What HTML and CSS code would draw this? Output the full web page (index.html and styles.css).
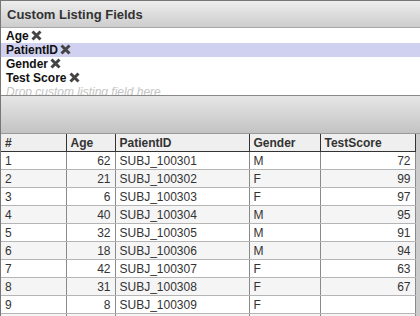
FILE: index.html
```html
<!DOCTYPE html>
<html lang="en">
<head>
  <meta charset="UTF-8" />
  <title>Custom Listing Fields</title>
  <link rel="stylesheet" href="styles.css">
</head>
<body>
  <div class="panel">
    <!-- Campos escolhidos -->
    <div class="panel-title">Custom Listing Fields</div>
    <ul class="field-list">
      <li>Age <svg class="remove" viewBox="0 0 11 11"><path d="M1.5 1.5L9.5 9.5M9.5 1.5L1.5 9.5"/></svg></li>
      <li class="selected">PatientID <svg class="remove" viewBox="0 0 11 11"><path d="M1.5 1.5L9.5 9.5M9.5 1.5L1.5 9.5"/></svg></li>
      <li>Gender <svg class="remove" viewBox="0 0 11 11"><path d="M1.5 1.5L9.5 9.5M9.5 1.5L1.5 9.5"/></svg></li>
      <li>Test Score <svg class="remove" viewBox="0 0 11 11"><path d="M1.5 1.5L9.5 9.5M9.5 1.5L1.5 9.5"/></svg></li>
      <li class="drop-hint">Drop custom listing field here</li>
    </ul>

    <div class="toolbar"></div>

    <!-- Grade de resultados -->
    <div class="grid-wrap">
      <table class="grid">
        <colgroup>
          <col class="c-num"><col class="c-age"><col class="c-id"><col class="c-gender"><col class="c-score">
        </colgroup>
        <thead>
          <tr><th>#</th><th>Age</th><th>PatientID</th><th>Gender</th><th>TestScore</th></tr>
        </thead>
        <tbody>
          <tr><td>1</td><td class="num">62</td><td>SUBJ_100301</td><td>M</td><td class="num">72</td></tr>
          <tr><td>2</td><td class="num">21</td><td>SUBJ_100302</td><td>F</td><td class="num">99</td></tr>
          <tr><td>3</td><td class="num">6</td><td>SUBJ_100303</td><td>F</td><td class="num">97</td></tr>
          <tr><td>4</td><td class="num">40</td><td>SUBJ_100304</td><td>M</td><td class="num">95</td></tr>
          <tr><td>5</td><td class="num">32</td><td>SUBJ_100305</td><td>M</td><td class="num">91</td></tr>
          <tr><td>6</td><td class="num">18</td><td>SUBJ_100306</td><td>M</td><td class="num">94</td></tr>
          <tr><td>7</td><td class="num">42</td><td>SUBJ_100307</td><td>F</td><td class="num">63</td></tr>
          <tr><td>8</td><td class="num">31</td><td>SUBJ_100308</td><td>F</td><td class="num">67</td></tr>
          <tr><td>9</td><td class="num">8</td><td>SUBJ_100309</td><td>F</td><td class="num"></td></tr>
          <tr class="empty"><td></td><td></td><td></td><td></td><td></td></tr>
        </tbody>
      </table>
    </div>
  </div>
</body>
</html>
```

FILE: styles.css
```css
/* Painel de campos customizados + grade */
body {
  margin: 0;
  padding: 0;
  font-family: "Liberation Sans", Arial, sans-serif;
  background: #fff;
  overflow: hidden;
}

.panel {
  width: 430px;
  height: 316px;
  border-top: 1px solid #777;
  border-left: 1px solid #777;
  box-sizing: border-box;
  overflow: hidden;
}

/* Titulo com gradiente */
.panel-title {
  height: 26px;
  line-height: 27px;
  padding-left: 6px;
  font-size: 13px;
  font-weight: bold;
  color: #333;
  background: linear-gradient(#ededed, #cdcdcd);
  border-bottom: 1px solid #a8a8a8;
}

/* Lista de campos */
.field-list {
  list-style: none;
  margin: 0;
  padding: 1px 0 0;
  height: 66px;
  overflow: hidden;
  border-bottom: 1px solid #888;
}
.field-list li {
  height: 14px;
  line-height: 14px;
  padding-left: 5px;
  font-size: 12px;
  font-weight: bold;
  color: #111;
}
.field-list li.selected {
  background: #d0d0f0;
}
.field-list .remove {
  width: 11px;
  height: 11px;
  vertical-align: -1px;
  margin-left: -1px;
  fill: none;
  stroke: #444;
  stroke-width: 3;
}
.field-list li.drop-hint {
  font-weight: normal;
  font-style: italic;
  color: #c4c4c4;
}

/* Barra cinza acima da grade */
.toolbar {
  height: 37px;
  background: linear-gradient(#e6e6e6, #c3c3c3);
  border-bottom: 1px solid #999;
}

.grid-wrap {
  background: #cbcbcb;
  height: 200px;
}

.grid {
  width: 414px;
  border-collapse: collapse;
  table-layout: fixed;
  font-size: 12px;
  color: #333;
  background: #fff;
}
.c-num { width: 65px; }
.c-age { width: 49px; }
.c-id { width: 134px; }
.c-gender { width: 71px; }
.c-score { width: 95px; }

.grid th {
  height: 17px;
  padding: 0 4px;
  text-align: left;
  font-weight: bold;
  background: #efefef;
  border: 1px solid #333;
  border-top: none;
  border-left-color: #555;
}
.grid th:first-child { border-left: none; }

.grid td {
  height: 17px;
  padding: 0 4px;
  border-left: 1px solid #8a8a8a;
  border-right: 1px solid #8a8a8a;
  border-bottom: 1px solid #b5b5b5;
  white-space: nowrap;
}
.grid td:first-child { border-left: none; }
.grid td.num { text-align: right; }
.grid tbody tr:nth-child(even) td { background: #f5f5f5; }
```
